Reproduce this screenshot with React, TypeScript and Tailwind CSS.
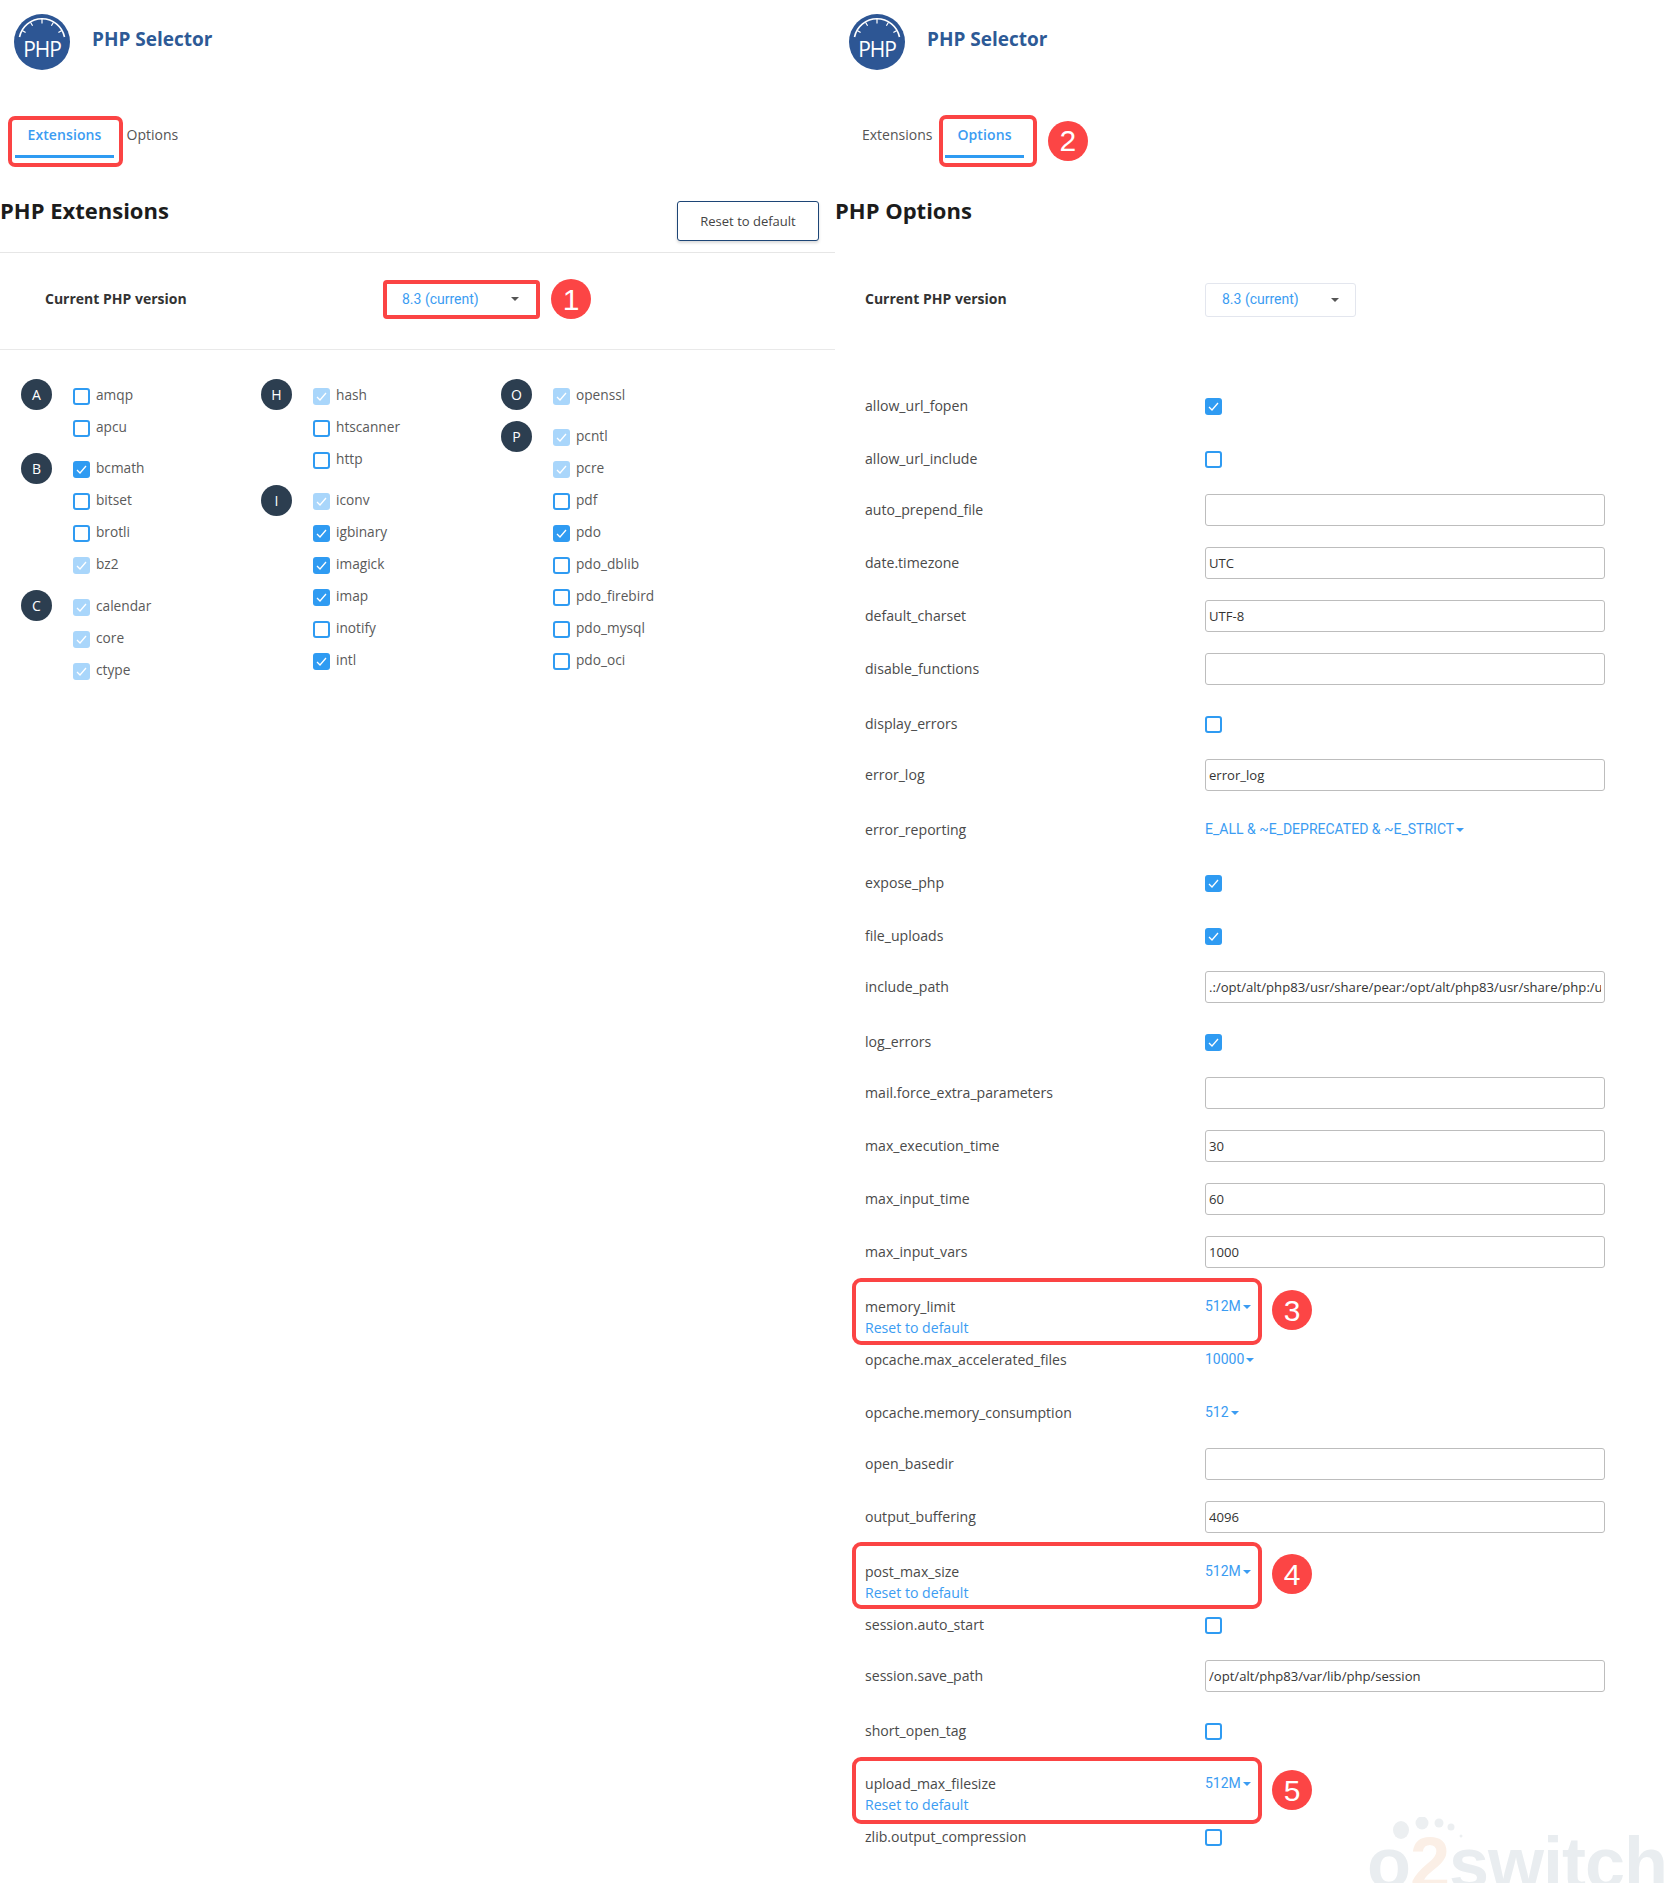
import React from "react";

const OPEN = "font-['Open_Sans',sans-serif]";
const BLUE = "text-[#3b9cf2]";

type Ext = { name: string; state?: "on" | "locked" };
type Group = { letter: string; items: Ext[] };

const columns: Group[][] = [
  [
    { letter: "A", items: [{ name: "amqp" }, { name: "apcu" }] },
    { letter: "B", items: [{ name: "bcmath", state: "on" }, { name: "bitset" }, { name: "brotli" }, { name: "bz2", state: "locked" }] },
    { letter: "C", items: [{ name: "calendar", state: "locked" }, { name: "core", state: "locked" }, { name: "ctype", state: "locked" }] },
  ],
  [
    { letter: "H", items: [{ name: "hash", state: "locked" }, { name: "htscanner" }, { name: "http" }] },
    {
      letter: "I",
      items: [
        { name: "iconv", state: "locked" },
        { name: "igbinary", state: "on" },
        { name: "imagick", state: "on" },
        { name: "imap", state: "on" },
        { name: "inotify" },
        { name: "intl", state: "on" },
      ],
    },
  ],
  [
    { letter: "O", items: [{ name: "openssl", state: "locked" }] },
    {
      letter: "P",
      items: [
        { name: "pcntl", state: "locked" },
        { name: "pcre", state: "locked" },
        { name: "pdf" },
        { name: "pdo", state: "on" },
        { name: "pdo_dblib" },
        { name: "pdo_firebird" },
        { name: "pdo_mysql" },
        { name: "pdo_oci" },
      ],
    },
  ],
];

type Mark = { n: number; box: string; badge: string };

type Option =
  | { name: string; kind: "check"; on?: boolean }
  | { name: string; kind: "input"; value?: string }
  | { name: string; kind: "select"; value: string; mark?: Mark };

const options: Option[] = [
  { name: "allow_url_fopen", kind: "check", on: true },
  { name: "allow_url_include", kind: "check" },
  { name: "auto_prepend_file", kind: "input" },
  { name: "date.timezone", kind: "input", value: "UTC" },
  { name: "default_charset", kind: "input", value: "UTF-8" },
  { name: "disable_functions", kind: "input" },
  { name: "display_errors", kind: "check" },
  { name: "error_log", kind: "input", value: "error_log" },
  { name: "error_reporting", kind: "select", value: "E_ALL & ~E_DEPRECATED & ~E_STRICT" },
  { name: "expose_php", kind: "check", on: true },
  { name: "file_uploads", kind: "check", on: true },
  { name: "include_path", kind: "input", value: ".:/opt/alt/php83/usr/share/pear:/opt/alt/php83/usr/share/php:/usr/share/pear" },
  { name: "log_errors", kind: "check", on: true },
  { name: "mail.force_extra_parameters", kind: "input" },
  { name: "max_execution_time", kind: "input", value: "30" },
  { name: "max_input_time", kind: "input", value: "60" },
  { name: "max_input_vars", kind: "input", value: "1000" },
  { name: "memory_limit", kind: "select", value: "512M", mark: { n: 3, box: "top-[-3px]", badge: "top-[9px]" } },
  { name: "opcache.max_accelerated_files", kind: "select", value: "10000" },
  { name: "opcache.memory_consumption", kind: "select", value: "512" },
  { name: "open_basedir", kind: "input" },
  { name: "output_buffering", kind: "input", value: "4096" },
  { name: "post_max_size", kind: "select", value: "512M", mark: { n: 4, box: "top-[-4px]", badge: "top-[8px]" } },
  { name: "session.auto_start", kind: "check" },
  { name: "session.save_path", kind: "input", value: "/opt/alt/php83/var/lib/php/session" },
  { name: "short_open_tag", kind: "check" },
  { name: "upload_max_filesize", kind: "select", value: "512M", mark: { n: 5, box: "top-[-1px]", badge: "top-[12px]" } },
  { name: "zlib.output_compression", kind: "check" },
];

function Badge({ n, className }: { n: number; className?: string }) {
  return (
    <span
      className={`flex h-[40px] w-[40px] items-center justify-center rounded-full bg-[#fc4545] font-['Liberation_Sans',sans-serif] text-[30px] text-white ${className ?? ""}`}
    >
      {n}
    </span>
  );
}

function Box({ state }: { state?: "on" | "locked" }) {
  if (!state) {
    return <span className="block h-[17px] w-[17px] shrink-0 rounded-[3px] border-2 border-[#2f9bf2] bg-white" />;
  }
  return (
    <span
      className={`flex h-[17px] w-[17px] shrink-0 items-center justify-center rounded-[3px] ${
        state === "on" ? "bg-[#2f9bf2]" : "bg-[#a9d6fb]"
      }`}
    >
      <svg width="13" height="13" viewBox="0 0 13 13" fill="none">
        <path d="M2 7 L5 10 L11 3" stroke="white" strokeWidth="1.3" />
      </svg>
    </span>
  );
}

function Logo() {
  return (
    <svg width="56" height="56" viewBox="0 0 56 56" className="shrink-0">
      <circle cx="28" cy="28" r="28" fill="#2d5694" />
      <path d="M5.5 23 A23 23 0 0 1 50.5 23" fill="none" stroke="white" strokeWidth="1.6" />
      <path
        d="M28 5 V9.5 M16.5 8.2 L18.6 11.8 M39.5 8.2 L37.4 11.8 M8.2 16.5 L11.6 18.6 M47.8 16.5 L44.4 18.6"
        stroke="white"
        strokeWidth="1.2"
      />
      <text x="28" y="43" textAnchor="middle" fill="white" fontSize="21" letterSpacing="-1" fontFamily="'Open Sans', sans-serif">
        PHP
      </text>
    </svg>
  );
}

function Header() {
  return (
    <div className="flex h-[56px] items-start pl-[14px]">
      <Logo />
      <div className="ml-[22px] mt-[11px] text-[19px] font-bold leading-[28px] text-[#2d5a96]">PHP Selector</div>
    </div>
  );
}

function Tab({ label, active, children }: { label: string; active?: boolean; children?: React.ReactNode }) {
  return (
    <div
      className={`relative h-[43px] px-[12.5px] pt-[10px] text-[14px] leading-[20px] ${
        active ? `border-b-[3px] border-[#2f9bf2] font-semibold tracking-[0.1px] ${BLUE}` : "text-[#555]"
      }`}
    >
      {label}
      {children}
    </div>
  );
}

function Caret() {
  return <span className="block h-0 w-0 border-x-[4px] border-t-[4px] border-x-transparent border-t-[#555]" />;
}

function ExtensionsPanel() {
  return (
    <div className="pt-[14px]">
      <Header />
      <div className="mt-[45px] flex pl-[15px]">
        <Tab label="Extensions" active>
          <span className="absolute bottom-[-12px] left-[-7px] right-[-9px] top-[1px] rounded-[7px] border-4 border-[#fb4444]" />
        </Tab>
        <Tab label="Options" />
      </div>
      <div className="flex h-[95px] items-start justify-between border-b border-[#e6e6e6] pr-[16px]">
        <h2 className="mt-[35px] text-[22px] font-bold leading-[34px] text-[#1c1c1c]">PHP Extensions</h2>
        <button className="mt-[43px] h-[40px] w-[142px] rounded-[3px] border border-[#1d4576] bg-white pt-[1px] text-[13px] text-[#444] shadow-[0_2px_3px_rgba(0,0,0,0.15)]">
          Reset to default
        </button>
      </div>
      <div className="flex h-[97px] items-center border-b border-[#e9e9e9] pb-[4px] pl-[45px]">
        <div className="mt-[-2px] w-[339px] shrink-0 text-[14px] font-bold text-[#333]">Current PHP version</div>
        <div className="ml-[-1px] flex h-[39px] w-[157px] items-center justify-between rounded-[4px] border-4 border-[#fb4444] pl-[15px] pr-[17px] font-['Roboto',sans-serif] text-[14px] text-[#3b9cf2]">
          8.3 (current)
          <Caret />
        </div>
        <Badge n={1} className="ml-[11px]" />
      </div>
      <div className="flex pl-[21px] pt-[30px]">
        {columns.map((col) => (
          <div key={col[0].letter} className="flex w-[240px] flex-col gap-[9.5px]">
            {col.map((g) => (
              <div key={g.letter} className="flex items-start">
                <span className="mt-[-1px] flex h-[31px] w-[31px] shrink-0 items-center justify-center rounded-full bg-[#2c3e50] text-[14px] text-white">
                  {g.letter}
                </span>
                <div className="ml-[21px]">
                  {g.items.map((it) => (
                    <div key={it.name} className="flex h-[32px] items-center gap-[6px] text-[13.7px] text-[#5a5a5a]">
                      <Box state={it.state} />
                      <span className="mt-[-2px]">{it.name}</span>
                    </div>
                  ))}
                </div>
              </div>
            ))}
          </div>
        ))}
      </div>
    </div>
  );
}

function SelectValue({ value }: { value: string }) {
  return (
    <span className={`flex items-center gap-[2px] font-['Roboto',sans-serif] text-[14px] ${BLUE}`}>
      {value}
      <span className="mt-[1px] block h-0 w-0 border-x-[4px] border-t-[4px] border-x-transparent border-t-[#3b9cf2]" />
    </span>
  );
}

function OptionRow({ opt }: { opt: Option }) {
  if (opt.kind === "select" && opt.mark) {
    return (
      <div className="relative flex h-[53px] items-start pt-[16px] text-[14.1px] text-[#4a4a4a]">
        <div className="w-[340px]">
          <div className="leading-[20px]">{opt.name}</div>
          <div className={`mt-[1px] leading-[20px] ${BLUE}`}>Reset to default</div>
        </div>
        <div className="mt-[-1px]">
          <SelectValue value={opt.value} />
        </div>
        <span className={`absolute left-[-13px] h-[67px] w-[410px] rounded-[9px] border-4 border-[#fb4444] ${opt.mark.box}`} />
        <Badge n={opt.mark.n} className={`absolute left-[407px] ${opt.mark.badge}`} />
      </div>
    );
  }
  const shift = opt.kind === "input" ? "pb-[6px]" : opt.kind === "select" ? "pb-[2px]" : "";
  return (
    <div className={`flex h-[53px] items-center text-[14.1px] text-[#4a4a4a] ${shift}`}>
      <div className={`w-[340px] ${opt.kind === "check" ? "mt-[-2px]" : ""}`}>{opt.name}</div>
      {opt.kind === "check" && <Box state={opt.on ? "on" : undefined} />}
      {opt.kind === "input" && (
        <input
          readOnly
          defaultValue={opt.value ?? ""}
          className="h-[32px] w-[400px] rounded-[3px] border border-[#bdbdbd] bg-white px-[3px] text-[13.1px] text-[#333] outline-none"
        />
      )}
      {opt.kind === "select" && <SelectValue value={opt.value} />}
    </div>
  );
}

function OptionsPanel() {
  return (
    <div className="pt-[14px]">
      <Header />
      <div className="mt-[45px] flex pl-[14.5px]">
        <Tab label="Extensions" />
        <Tab label="Options" active>
          <span className="absolute bottom-[-12px] left-[-6px] right-[-13px] top-0 rounded-[7px] border-4 border-[#fb4444]" />
          <Badge n={2} className="absolute left-[103px] top-[6px] font-normal tracking-normal" />
        </Tab>
      </div>
      <div className="h-[95px]">
        <h2 className="pt-[35px] text-[22px] font-bold leading-[34px] text-[#1c1c1c]">PHP Options</h2>
      </div>
      <div className="flex h-[97px] items-center pb-[4px] pl-[30px]">
        <div className="mt-[-2px] w-[340px] shrink-0 text-[14px] font-bold text-[#333]">Current PHP version</div>
        <div className="flex h-[34px] w-[151px] items-center justify-between rounded-[3px] border border-[#e3e6ee] pl-[16px] pr-[16px] font-['Roboto',sans-serif] text-[14px] text-[#3b9cf2]">
          8.3 (current)
          <Caret />
        </div>
      </div>
      <div className="px-[30px] pt-[30px]">
        {options.map((o) => (
          <OptionRow key={o.name} opt={o} />
        ))}
      </div>
    </div>
  );
}

export default function App() {
  return (
    <div className={`relative grid h-[1883px] w-[1669px] grid-cols-[835px_834px] overflow-hidden bg-white ${OPEN}`}>
      <ExtensionsPanel />
      <OptionsPanel />
      {/* hosting watermark, cut by the page edge */}
      <div className="pointer-events-none absolute left-[1367px] top-[1813px] h-[70px] w-[302px] overflow-hidden">
        <svg width="90" height="30" viewBox="0 0 90 30" className="absolute left-[14px] top-[4px]">
          <ellipse cx="20" cy="13" rx="8" ry="9" fill="#eceff1" />
          <circle cx="41" cy="6" r="6.5" fill="#eceff1" />
          <circle cx="58" cy="6" r="4.5" fill="#eceff1" />
          <circle cx="70" cy="10" r="3.5" fill="#eceff1" />
          <circle cx="80" cy="19" r="1.5" fill="#eceff1" />
        </svg>
        <div className="absolute left-0 top-[10px] whitespace-nowrap font-['Liberation_Sans',sans-serif] text-[72px] font-bold leading-[80px] tracking-[-1px] text-[#e9edf0]">
          o<span className="text-[#fbefe6]">2</span>switch
        </div>
      </div>
    </div>
  );
}
